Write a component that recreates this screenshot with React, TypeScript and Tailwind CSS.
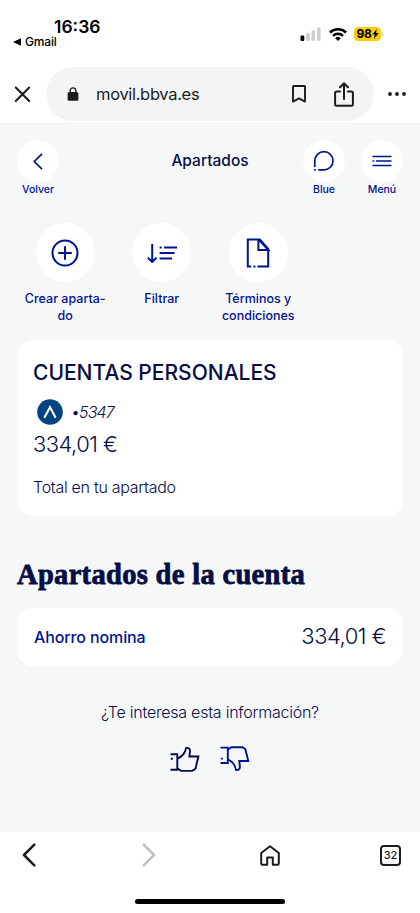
import React from 'react';

const StatusBar = () => (
  <div className="h-[67px] bg-white flex justify-between text-black">
    <div className="pt-[15px] pl-[13px]">
      <p className="pl-[41px] text-[17.5px] leading-[23px] font-semibold">16:36</p>
      <p className="flex items-center gap-[4px] text-[12px] leading-[14px] -mt-[4px] pt-[1px] font-medium tracking-[-0.15px]">
        <svg width="8" height="8" viewBox="0 0 8 8">
          <path d="M0 4 8 .3v7.4z" />
        </svg>
        Gmail
      </p>
    </div>
    <div className="flex items-center h-[16px] mt-[26px] pr-[37px]">
      <svg width="21" height="14" viewBox="0 0 21 14" fill="#cfcfcf">
        <rect x="0.5" y="8.5" width="3.8" height="5.5" rx="1.2" fill="#000" />
        <rect x="6" y="6" width="3.6" height="8" rx="1.2" />
        <rect x="11.5" y="3.2" width="3.6" height="10.8" rx="1.2" />
        <rect x="17" y="0.5" width="3.6" height="13.5" rx="1.2" />
      </svg>
      <svg className="ml-[8px]" width="18" height="13" viewBox="0 0 18 13" fill="none" stroke="#000" strokeWidth="2.5">
        <path d="M.9 4.5a11.6 11.6 0 0 1 16.2 0" />
        <path d="M4 7.8a7.2 7.2 0 0 1 10 0" />
        <path d="M6.2 10.2a4 4 0 0 1 5.6 0L9 13z" fill="#000" stroke="none" />
      </svg>
      <div className="ml-[7px] h-[14px] w-[27px] rounded-[4.5px] bg-[#fccc05] flex items-center justify-center text-[12px] font-bold tracking-[-0.2px]">
        98
        <svg width="7" height="10" viewBox="0 0 7 10">
          <path d="M4.8 0 .3 5.6h2.5L1.9 10l4.8-5.9H4z" />
        </svg>
      </div>
      <span className="ml-[1px] h-[4px] w-[1px] bg-[#cccccc]" />
    </div>
  </div>
);

const AddressBar = () => (
  <div className="h-[57px] bg-white border-b border-[#f0f1f2] flex items-start text-[#1c1c1e]">
    <svg className="ml-[14px] mt-[19px]" width="17" height="17" viewBox="0 0 17 17" fill="none" stroke="currentColor" strokeWidth="2.1" strokeLinecap="round">
      <path d="m1.8 1.5 13.4 13.4M15.2 1.5 1.8 14.9" />
    </svg>
    <div className="ml-[15px] h-[54px] w-[328px] rounded-full bg-[#f3f4f6] flex items-center">
      <svg className="ml-[21px]" width="12" height="14" viewBox="0 0 12 14">
        <rect x="0.6" y="5" width="10.8" height="8.8" rx="1.5" fill="currentColor" />
        <path d="M3.2 5.5V3.7a2.8 2.8 0 0 1 5.6 0v1.8" fill="none" stroke="currentColor" strokeWidth="1.3" />
      </svg>
      <span className="ml-[17px] w-[196px] text-[16.5px] tracking-[-0.32px]">movil.bbva.es</span>
      <svg width="14" height="18" viewBox="0 0 14 18" fill="none" stroke="currentColor" strokeWidth="1.9" strokeLinejoin="round">
        <path d="M1 1.6Q1 1 1.6 1h10.8q.6 0 .6.6v15l-6-3.2-6 3.2z" />
      </svg>
      <svg className="ml-[28px]" width="20" height="25" viewBox="0 0 20 25" fill="none" stroke="currentColor" strokeWidth="2" strokeLinejoin="round" strokeLinecap="round">
        <path d="M6 9.5H2.6q-1.5 0-1.5 1.5v11.2q0 1.5 1.5 1.5h14.8q1.5 0 1.5-1.5V11q0-1.5-1.5-1.5H14" />
        <path d="M10 17V1.5M6 5.2l4-4 4 4" />
      </svg>
    </div>
    <svg className="ml-[14px] mt-[25px]" width="18" height="4" viewBox="0 0 18 4" fill="currentColor">
      <circle cx="2" cy="2" r="1.9" />
      <circle cx="9" cy="2" r="1.9" />
      <circle cx="16" cy="2" r="1.9" />
    </svg>
  </div>
);

const NavButton = ({ label, children }: { label: string; children: React.ReactNode }) => (
  <div className="w-[42px] flex flex-col items-center">
    <div className="w-[42px] h-[42px] rounded-full bg-white flex items-center justify-center">{children}</div>
    <span className="text-[10.5px] leading-[15px] font-medium whitespace-nowrap">{label}</span>
  </div>
);

const Action = ({ label, children }: { label: React.ReactNode; children: React.ReactNode }) => (
  <div className="w-[96.5px] flex flex-col items-center">
    <div className="w-[59px] h-[59px] rounded-full bg-white flex items-center justify-center">{children}</div>
    <span className="mt-[9px] text-[12.5px] leading-[16.5px] font-medium text-center whitespace-nowrap">{label}</span>
  </div>
);

const App = () => {
  return (
    <div className="w-[420px] h-[913px] overflow-hidden flex flex-col bg-[#f6f8f8] font-['Inter',sans-serif] text-[#070e46]">
      <StatusBar />
      <AddressBar />
      <main className="h-[708px] px-[17px] flex flex-col">
        <header className="pt-[16px] flex text-[#001391]">
          <NavButton label="Volver">
            <svg width="10" height="17" viewBox="0 0 10 17" fill="none" stroke="currentColor" strokeWidth="1.7">
              <path d="M9 .8 1.3 8.5 9 16.2" />
            </svg>
          </NavButton>
          <h1 className="w-[244px] pl-[58px] pt-[10px] text-[15.5px] leading-[22px] font-medium text-[#070e46] text-center whitespace-nowrap">
            Apartados
          </h1>
          <div className="flex gap-[16px]">
            <NavButton label="Blue">
              <svg width="22" height="22" viewBox="0 0 22 22" fill="none" stroke="currentColor" strokeWidth="1.7">
                <path d="M1.8 17v-6.2a9.1 9.1 0 1 1 9.1 9.1H5.2" />
                <path d="M.9 19.9h1.8" />
              </svg>
            </NavButton>
            <NavButton label="Menú">
              <svg width="20" height="12" viewBox="0 0 20 12" fill="none" stroke="currentColor" strokeWidth="1.7">
                <path d="M.5 1.5h19M.5 6h1.8M4 6h15.5M.5 10.5h19" />
              </svg>
            </NavButton>
          </div>
        </header>

        <div className="mt-[26px] h-[117px] flex text-[#001391]">
          <Action label={<>Crear aparta-<br />do</>}>
            <svg width="28" height="28" viewBox="0 0 28 28" fill="none" stroke="currentColor" strokeWidth="2">
              <circle cx="14" cy="14" r="12.5" />
              <path d="M14 7.2v13.6M7.2 14h13.6" />
            </svg>
          </Action>
          <Action label="Filtrar">
            <svg width="30" height="20" viewBox="0 0 30 20" fill="none" stroke="currentColor" strokeWidth="2">
              <path d="M5.2 1v18M.8 14.600 5.200 19l4.400-4.400" />
              <path d="M12.6 4.500h2M17 4.500h13M12.600 10h15M12.600 15.500h12.500" />
            </svg>
          </Action>
          <Action label={<>Términos y<br />condiciones</>}>
            <svg width="24" height="30" viewBox="0 0 24 30" fill="none" stroke="currentColor" strokeWidth="2">
              <path d="M5.2 28.6H1.8V1.4h12l8.4 9.6v17.6H11.4" />
              <path d="M12.4 1.4V12h10L13 1.8" />
              <path d="M7.4 28.6h2" />
            </svg>
          </Action>
        </div>

        <section className="h-[176px] rounded-[16px] bg-white px-[17px] pt-[19px]">
          <h2 className="-ml-px text-[21px] leading-[28px] font-medium whitespace-nowrap">CUENTAS PERSONALES</h2>
          <div className="mt-[12px] h-[26px] pl-[3px] flex items-center gap-[8px]">
            <svg width="26" height="26" viewBox="0 0 26 26">
              <circle cx="13" cy="13" r="12.8" fill="#004481" />
              <path d="m7.3 18.8 5.7-10.6 5.7 10.6" fill="none" stroke="#fff" strokeWidth="2.1" />
            </svg>
            <span className="text-[16px] font-light italic tracking-[-0.9px]">•5347</span>
          </div>
          <p className="mt-[5px] -ml-px text-[22px] leading-[28px] font-light tracking-[-0.55px] whitespace-nowrap">334,01 €</p>
          <p className="mt-[18px] -ml-px text-[16px] leading-[22px] font-light tracking-[-0.28px] whitespace-nowrap">Total en tu apartado</p>
        </section>

        <h2 className="mt-[42px] h-[34px] font-['Liberation_Serif',serif] text-[28.5px] leading-[34px] font-bold tracking-[0.32px] [-webkit-text-stroke:0.8px_#070e46] whitespace-nowrap">
          Apartados de la cuenta
        </h2>

        <section className="mt-[16px] h-[58px] rounded-[16px] bg-white px-[17px] flex items-center justify-between">
          <span className="text-[16px] font-medium tracking-[-0.12px] text-[#001391]">Ahorro nomina</span>
          <span className="-mt-px text-[22px] font-light tracking-[-0.5px]">334,01 €</span>
        </section>

        <p className="mt-[35px] text-center text-[16px] leading-[22px] font-light tracking-[-0.23px]">¿Te interesa esta información?</p>
        <div className="mt-[23px] pl-[153px] flex gap-[19px]">
          <svg width="31" height="27" viewBox="0 0 31 27" fill="none" stroke="currentColor" strokeWidth="1.9">
            <path d="M.5 8.2h6.8v15.6H.5M.8 12.8h2" />
            <path d="M7.3 12.7c4.400-2 8-5.600 8.800-10.700 2.200-.6 4.200.8 3.900 3.200l-.6 5.300h9l-3 12.400-3.200 2H11l-3.700-2.600" />
          </svg>
          <svg className="text-[#001391]" width="31" height="27" viewBox="0 0 31 27" fill="none" stroke="currentColor" strokeWidth="1.9">
            <path d="M.5 1.6h7.300v15.400H.5M.8 12.600h2" />
            <path d="M7.8 3.8 11.300 1.200h11.200l2.800 1.800 3 12h-9l.6 5.600c.2 2.800-2 3.900-4 3.200-.5-4.600-3.800-8.400-8.100-10.400" />
          </svg>
        </div>
      </main>

      <nav className="h-[81px] bg-white flex flex-col items-center text-[#1c1c1e]">
        <div className="w-full h-[46px] pl-[22px] pr-[19px] flex items-center">
          <svg width="14" height="24" viewBox="0 0 14 24" fill="none" stroke="currentColor" strokeWidth="2.5" strokeLinecap="round" strokeLinejoin="round">
            <path d="M12.3 1.7 2 12l10.3 10.3" />
          </svg>
          <svg className="ml-[106px] text-[#bcc0c6]" width="14" height="24" viewBox="0 0 14 24" fill="none" stroke="currentColor" strokeWidth="2.5" strokeLinecap="round" strokeLinejoin="round">
            <path d="M1.7 1.7 12 12 1.7 22.3" />
          </svg>
          <svg className="ml-[104px]" width="20" height="21" viewBox="0 0 20 21" fill="none" stroke="currentColor" strokeWidth="2" strokeLinejoin="round">
            <path d="M1.2 8 10 1.2 18.800 8v10.600q0 1.200-1.200 1.200h-4.800v-7.300H7.200v7.300H2.400q-1.200 0-1.200-1.200z" />
          </svg>
          <div className="ml-auto w-[21px] h-[21px] rounded-[4px] border-2 border-[#1c1c1e] flex items-center justify-center text-[11px] leading-none font-medium tracking-[-0.2px]">32</div>
        </div>
        <div className="mt-[21px] w-[150px] h-[5px] rounded-full bg-black" />
      </nav>
    </div>
  );
};

export default App;
